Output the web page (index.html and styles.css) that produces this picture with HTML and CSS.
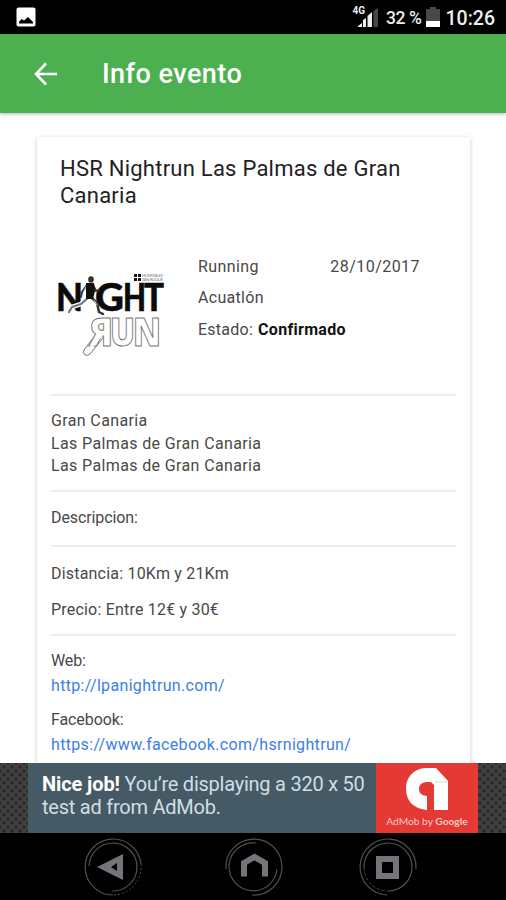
FILE: index.html
```html
<!DOCTYPE html>
<html lang="es">
<head>
<meta charset="utf-8">
<title>Info evento</title>
<link rel="stylesheet" href="styles.css">
</head>
<body>
<div class="screen">
  <div class="status">
    <svg class="status-photo" width="20" height="20" viewBox="0 0 20 20"><rect x=".5" y=".5" width="19" height="19" rx="2" fill="#fff"/><path d="M3 16.500V15l2.500-3 2.500 1.500L12 10l5 5v1.500z" fill="#000"/></svg>
    <div class="network">
      <span class="network-type">4G</span>
      <svg width="21" height="20" viewBox="0 0 21 20"><path d="M0 19v-1l4-3v4zM5 12l3-2v9H5zM9.500 8 14 4v15H9.500z" fill="#eee"/><path d="M15.500 3 20 0v19h-4.500z" fill="#484848"/></svg>
    </div>
    <span class="percent">32 %</span>
    <svg class="battery" width="14" height="21" viewBox="0 0 14 21"><path d="M4 0h6v2h4v13H0V2h4z" fill="#484848"/><path d="M0 14h14v6H0z" fill="#fff"/></svg>
    <span class="clock">10:26</span>
  </div>
  <header class="toolbar">
    <svg class="back" width="24" height="24" viewBox="0 0 24 24" fill="none" stroke="#fff" stroke-width="2.600"><path d="M12 1.500 2 12l10 10.500M2 12h21"/></svg>
    <h1>Info evento</h1>
  </header>
  <main class="content">
    <article class="card">
      <h2>HSR Nightrun Las Palmas de Gran<br>Canaria</h2>
      <section class="summary">
        <svg class="logo" width="110" height="90" viewBox="0 0 110 90">
          <g class="logo-night">
            <text x="0" y="38" textLength="27" lengthAdjust="spacingAndGlyphs">N</text>
            <text x="39" y="38" textLength="29" lengthAdjust="spacingAndGlyphs">G</text>
            <text x="67" y="38" textLength="23" lengthAdjust="spacingAndGlyphs">H</text>
            <text x="88" y="38" textLength="20" lengthAdjust="spacingAndGlyphs">T</text>
          </g>
          <g fill="none" stroke-linecap="round" stroke-linejoin="round">
            <path d="M33 24l-8 7-9 3-3 5" stroke="#fff" stroke-width="4.500"/>
            <path d="M33 24l-8 7-9 3-3 5" stroke="#777" stroke-width="2.200"/>
            <path d="M35 24l6 6 2 9 4 2" stroke="#333" stroke-width="2.500"/>
            <path d="M31 12l-5 7-1 5M37 12l3 6 3-1" stroke="#333" stroke-width="2"/>
            <path d="M31 12l-3 6M38 27l3 5" stroke="#ccc" stroke-width="1"/>
          </g>
          <path d="M30 10h8l1 8-2 8h-7z" fill="#111"/><ellipse cx="35" cy="6.500" rx="2.800" ry="3.200" fill="#333"/>
          <path d="M78 1h3v3h-3zM82 1h3v3h-3zM78 5h3v3h-3zM82 5h3v3h-3z" fill="#151515"/>
          <g class="logo-sponsor"><text x="86" y="4" textLength="21">HOSPITALES</text><text x="86" y="8" textLength="21">SAN ROQUE</text></g>
          <path d="M41 60h10L34 81q-2 2-5 1-3-2-1-5z" class="logo-leg"/>
          <g class="logo-run">
            <text x="33" y="73" textLength="24" lengthAdjust="spacingAndGlyphs">Я</text>
            <text x="54" y="73" textLength="25" lengthAdjust="spacingAndGlyphs">U</text>
            <text x="77" y="73" textLength="28" lengthAdjust="spacingAndGlyphs">N</text>
          </g>
          <path d="M42 62h5L33 79q-2 2-3 0z" fill="#fff"/>
        </svg>
        <div class="facts">
          <div class="fact"><span class="running">Running</span><span class="date">28/10/2017</span></div>
          <div class="fact second">Acuatlón</div>
          <div class="fact state"><span>Estado:</span> <b>Confirmado</b></div>
        </div>
      </section>
      <section class="place">Gran Canaria<br>Las Palmas de Gran Canaria<br>Las Palmas de Gran Canaria</section>
      <section class="description">Descripcion:</section>
      <section class="details"><p>Distancia: 10Km y 21Km</p><p>Precio: Entre 12€ y 30€</p></section>
      <section class="links">
        <p class="label">Web:</p><p><a>http://lpanightrun.com/</a></p>
        <p class="label facebook">Facebook:</p><p><a>https://www.facebook.com/hsrnightrun/</a></p>
      </section>
    </article>
  </main>
  <aside class="ad">
    <div class="ad-text"><b>Nice job!</b> You’re displaying a 320 x 50<br>test ad from AdMob.</div>
    <div class="admob">
      <svg width="44" height="44" viewBox="0 0 44 44"><path d="M22 43C9 42 1 34 1 22 1 9 10 1 22 1h9l12 13v29H29V18l-3-3h-4c-5 0-8 3-8 7s3 7 8 7z" fill="#fff"/><path d="M30 15h12" stroke="#d5d5d5"/></svg>
      <span>AdMob by <b>Google</b></span>
    </div>
  </aside>
  <nav class="nav">
    <svg width="60" height="60" viewBox="0 0 60 60" fill="none"><path d="M6 29A24 24 0 1 1 29 54" stroke="#505050" stroke-width="1.200"/><path d="M30 58A28 28 0 1 1 58 27" stroke="#505050" stroke-width="1.200"/><path d="M58 27A28 28 0 0 1 30 58" stroke="#505050" stroke-dasharray="2 2"/><path fill="#73757a" fill-rule="evenodd" d="M14 30 40 17v26zM28 30l6 4v-8z"/></svg>
    <svg width="60" height="60" viewBox="0 0 60 60" fill="none"><path d="M32 6A24 24 0 1 0 53 32" stroke="#505050" stroke-width="1.200"/><path d="M2 32A28 28 0 1 1 28 58" stroke="#505050" stroke-width="1.200"/><path d="M20 39.500V26l10.500-6L41 26v13.500" stroke="#73757a" stroke-width="6"/></svg>
    <svg width="60" height="60" viewBox="0 0 60 60" fill="none"><path d="M6 31A24 24 0 1 1 31 54" stroke="#505050" stroke-width="1.200"/><path d="M6 31A24 24 0 0 0 31 54" stroke="#454545" stroke-dasharray="3 2"/><path d="M29 58A28 28 0 1 1 58 32" stroke="#505050" stroke-width="1.200"/><path d="M21 22h17v17H21z" stroke="#73757a" stroke-width="6"/></svg>
  </nav>
</div>
</body>
</html>
```

FILE: styles.css
```css
* { box-sizing: border-box; }
body { margin: 0; font-family: Roboto, sans-serif; background: #fff; }
h1, h2, p { margin: 0; }
.screen { width: 506px; height: 900px; display: flex; flex-direction: column; overflow: hidden; }
.status { height: 34px; flex: none; background: #000; color: #eee; display: flex; align-items: flex-start; padding: 7px 11px 0 16px; }
.network { display: flex; margin-left: auto; align-items: flex-start; }
.network-type { font-size: 10px; line-height: 9px; font-weight: 700; margin-right: -7px; margin-top: -1px; }
.network svg { margin-top: 1px; }
.percent { font-size: 17.500px; line-height: 23px; font-weight: 500; margin-left: 7px; letter-spacing: -.4px; white-space: nowrap; }
.battery { margin-left: 4px; }
.clock { font-size: 19.500px; line-height: 23px; font-weight: 500; margin-left: 6px; }
.toolbar { height: 79px; flex: none; background: #4caf50; display: flex; align-items: center; padding-left: 34px; box-shadow: 0 1px 4px rgba(0,0,0,.3); z-index: 1; }
.toolbar h1 { color: #fff; font-size: 27px; font-weight: 500; letter-spacing: .45px; margin-left: 44px; line-height: 32px; }
.content { height: 650px; flex: none; padding: 24px 36px 0 37px; overflow: hidden; background: #fff; }
.card { height: 680px; background: #fff; border-radius: 3px; box-shadow: 0 1px 4px rgba(0,0,0,.22); padding: 18px 14px 0; color: #484848; font-size: 16px; letter-spacing: .2px; }
.card h2 { color: #222; font-size: 22px; line-height: 27px; font-weight: 400; padding-left: 9px; height: 96px; white-space: nowrap; letter-spacing: .24px; }
.summary { height: 145px; border-bottom: 2px solid #eee; display: flex; }
.logo { margin: 22px 0 0 5px; flex: none; overflow: visible; }
.logo-night { font: 900 37.500px Lato, sans-serif; fill: #0b0b0b; stroke: #0b0b0b; stroke-width: .5px; letter-spacing: 0; }
.logo-sponsor { font: 4px Lato, sans-serif; fill: #777; letter-spacing: 0; }
.logo-run { font: 800 38px "Open Sans", sans-serif; letter-spacing: 0; fill: #fff; stroke: #777; stroke-width: 1px; }
.logo-leg { fill: #fff; stroke: #777; stroke-width: 1px; }
.facts { margin-left: 32px; flex: 1; }
.fact { height: 31.500px; line-height: 31px; display: flex; }
.running { letter-spacing: .4px; }
.second { line-height: 30px; letter-spacing: .3px; }
.date { margin-left: auto; margin-right: 36px; letter-spacing: .45px; }
.state { letter-spacing: .25px; }
.state b { color: #111; margin-left: 5px; letter-spacing: .3px; }
.place { height: 96px; line-height: 22.500px; padding-top: 14px; border-bottom: 2px solid #eee; letter-spacing: .37px; }
.description { height: 55px; line-height: 22px; padding-top: 15px; border-bottom: 2px solid #eee; letter-spacing: -.1px; }
.details { height: 89px; line-height: 22px; padding-top: 16px; border-bottom: 2px solid #eee; }
.details p + p { margin-top: 14px; }
.links { padding-top: 12px; line-height: 25px; }
.links .label { letter-spacing: -.1px; }
.links .facebook { margin-top: 9px; }
.links a { color: #3c7de6; letter-spacing: .33px; }
.ad { height: 70px; flex: none; padding: 0 28px; display: flex; background: radial-gradient(circle, #2b2b2b 1.500px, transparent 2px) 0 0 / 8px 8px, radial-gradient(circle, #2b2b2b 1.500px, transparent 2px) 4px 4px / 8px 8px, #414141; }
.ad-text { flex: 1; background: #455a64; color: #cfdfe5; font-size: 20px; font-weight: 400; line-height: 23px; padding: 10px 0 0 14px; white-space: nowrap; letter-spacing: -.24px; }
.ad-text b { color: #fff; letter-spacing: -.1px; }
.admob { width: 102px; background: #e53935; color: #ffc7c0; display: flex; flex-direction: column; align-items: center; padding-top: 4px; font: 10.200px/16px Lato, sans-serif; white-space: nowrap; }
.admob span { margin-top: 2px; }
.nav { height: 67px; flex: none; background: #000; display: flex; padding: 4px 0 0 83px; }
.nav svg:nth-child(2) { margin-left: 81px; }
.nav svg:nth-child(3) { margin-left: 74px; }
```
